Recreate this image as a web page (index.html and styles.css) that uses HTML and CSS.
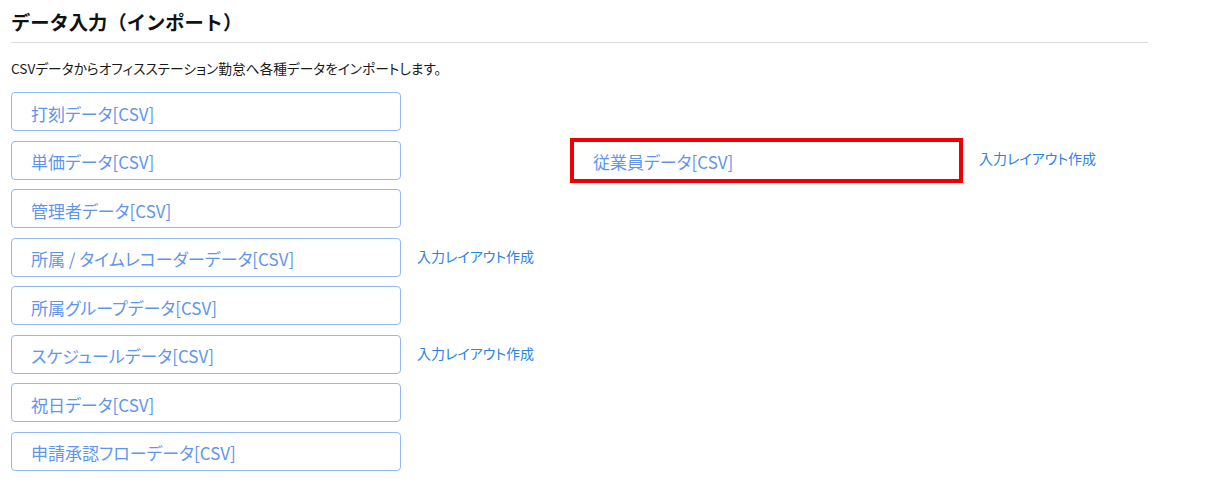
FILE: index.html
```html
<!DOCTYPE html>
<html lang="ja">
<head>
<meta charset="utf-8">
<link rel="stylesheet" href="styles.css">
</head>
<body>
<div class="page">
  <h1 class="title">データ入力（インポート）</h1>
  <p class="desc">CSVデータからオフィスステーション勤怠へ各種データをインポートします。</p>
  <div class="cols">
    <div class="list">
      <div class="row"><a class="btn">打刻データ[CSV]</a></div>
      <div class="row"><a class="btn">単価データ[CSV]</a></div>
      <div class="row"><a class="btn">管理者データ[CSV]</a></div>
      <div class="row"><a class="btn">所属 / タイムレコーダーデータ[CSV]</a><a class="link">入力レイアウト作成</a></div>
      <div class="row"><a class="btn">所属グループデータ[CSV]</a></div>
      <div class="row"><a class="btn">スケジュールデータ[CSV]</a><a class="link">入力レイアウト作成</a></div>
      <div class="row"><a class="btn">祝日データ[CSV]</a></div>
      <div class="row"><a class="btn">申請承認フローデータ[CSV]</a></div>
    </div>
    <div class="list list-right">
      <div class="row"><a class="btn btn-marked">従業員データ[CSV]</a><a class="link link-right">入力レイアウト作成</a></div>
    </div>
  </div>
</div>
</body>
</html>
```

FILE: styles.css
```css
html, body {
  margin: 0;
  padding: 0;
  background: #ffffff;
}
body {
  font-family: "Noto Sans CJK JP", "Noto Sans", sans-serif;
  color: #111111;
}
.page {
  width: 1137px;
  padding-left: 11px;
}
.title {
  margin: 0;
  padding-top: 10px;
  padding-bottom: 8px;
  line-height: 24px;
  font-size: 19.3px;
  font-weight: 700;
  color: #111111;
  border-bottom: 1px solid #dcdcdc;
}
.desc {
  margin: 15px 0 14px;
  line-height: 20px;
  font-size: 13.7px;
  font-feature-settings: "palt";
  color: #1a1a1a;
}
.cols {
  display: grid;
  grid-template-columns: 562px auto;
  align-items: start;
}
.list {
  display: flex;
  flex-direction: column;
  gap: 9.5px;
}
.list-right {
  padding-top: 48.5px;
}
.row {
  display: flex;
  align-items: center;
  height: 39px;
}
.btn {
  box-sizing: border-box;
  display: flex;
  align-items: center;
  width: 390px;
  height: 39px;
  padding: 3px 0 0 19px;
  border: 1px solid #92b9f3;
  border-radius: 4px;
  font-size: 17px;
  font-feature-settings: "palt";
  color: #5f96ec;
  white-space: nowrap;
}
.btn-marked {
  width: 387px;
  border-radius: 0;
  outline: 4px solid #f00000;
  outline-offset: -1px;
}
.link {
  margin-left: 16px;
  margin-top: -2px;
  font-size: 14px;
  font-feature-settings: "palt";
  color: #2a83e8;
  white-space: nowrap;
}
.link-right {
  margin-left: 19px;
  margin-top: -4px;
}
```
